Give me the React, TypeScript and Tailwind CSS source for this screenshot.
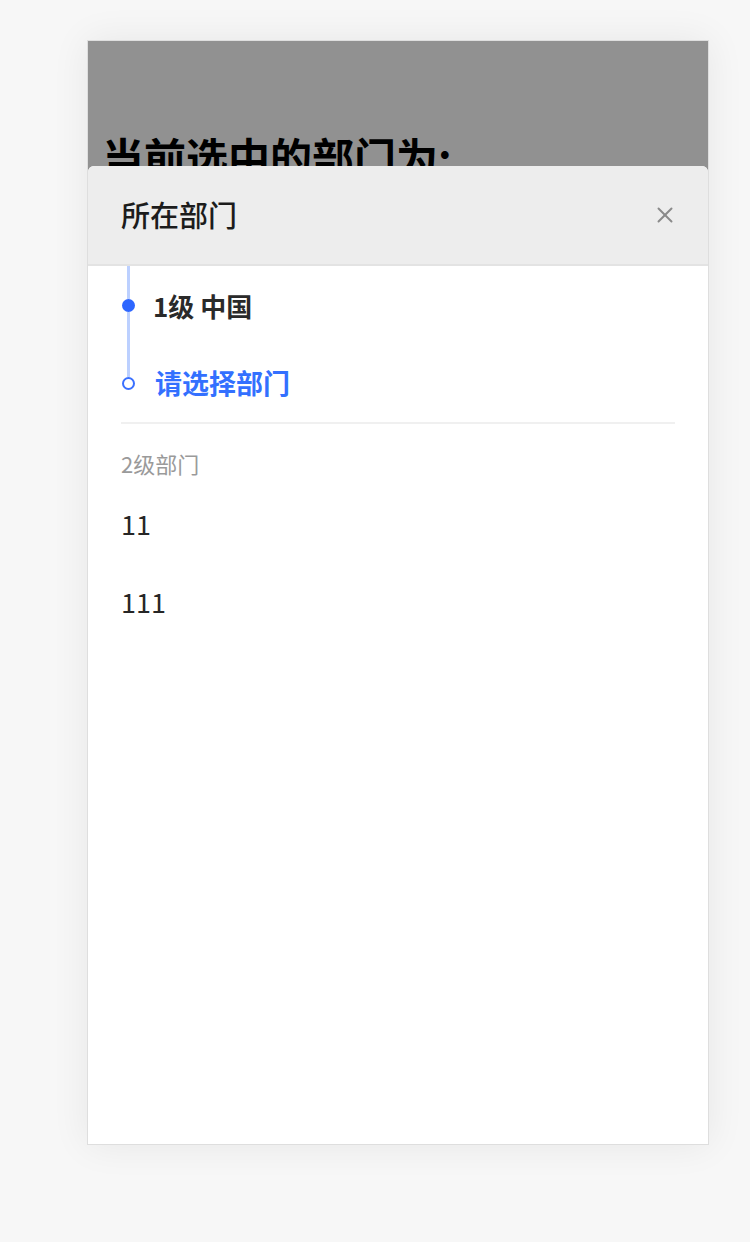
import { X } from 'lucide-react';

const font = { fontFamily: '"Noto Sans CJK SC", "Noto Sans", sans-serif' };

function TimelineRow({ label, active, last }: { label: string; active?: boolean; last?: boolean }) {
  return (
    <div className="flex h-[78px] items-stretch">
      <div className="flex w-[14px] flex-col items-center">
        <div className="w-[3px] flex-1 bg-[#bcd0ff]" />
        {active ? (
          <div className="h-[13px] w-[13px] rounded-full bg-[#2d66ff]" />
        ) : (
          <div className="h-[13px] w-[13px] rounded-full border-2 border-[#3a70ff] bg-white" />
        )}
        <div className={last ? 'w-[3px] flex-1' : 'w-[3px] flex-1 bg-[#bcd0ff]'} />
      </div>
      <div
        className={
          active
            ? 'ml-[18px] flex items-center text-[26px] font-bold text-[#2a2a2a]'
            : 'ml-[20px] flex items-center text-[27px] font-bold text-[#3370ff]'
        }
      >
        {label}
      </div>
    </div>
  );
}

export default function App() {
  return (
    <div className="min-h-[1242px] w-full bg-[#f7f7f7] pt-[40px]" style={font}>
      <div className="ml-[87px] flex h-[1105px] w-[622px] flex-col overflow-hidden border border-[#dedede] bg-[#919191] shadow-[0_0_36px_rgba(0,0,0,0.07)]">
        <div className="h-[125px] shrink-0 overflow-hidden pl-[14px] pt-[94px]">
          <h1 className="whitespace-nowrap text-[42px] font-bold leading-none text-black">当前选中的部门为:</h1>
        </div>
        <div className="flex flex-1 flex-col overflow-hidden rounded-t-[6px] bg-white">
          <div className="flex h-[100px] shrink-0 items-center justify-between border-b-2 border-[#e3e3e3] bg-[#ededed] pl-[33px] pr-[30px]">
            <span className="text-[29px] font-medium text-[#1c1c1c]">所在部门</span>
            <X className="h-[26px] w-[26px] text-[#8a8a8a]" strokeWidth={1.8} />
          </div>
          <div className="px-[33px]">
            <TimelineRow label="1级 中国" active />
            <TimelineRow label="请选择部门" last />
            <div className="h-[2px] bg-[#f0f0f0]" />
            <div className="pb-[11px] pt-[28px] text-[22px] leading-[22px] text-[#9a9a9a]">2级部门</div>
            <div className="flex h-[78px] items-center text-[27px] text-[#262626]">11</div>
            <div className="flex h-[78px] items-center text-[27px] text-[#262626]">111</div>
          </div>
        </div>
      </div>
    </div>
  );
}
